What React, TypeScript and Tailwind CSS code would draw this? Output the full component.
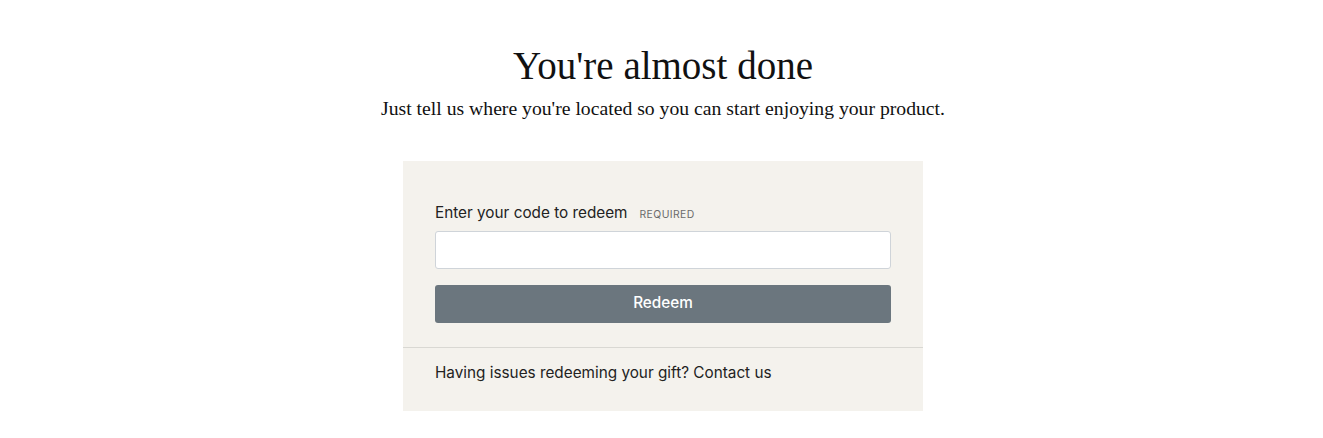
export default function App() {
  return (
    <div className="min-h-[438px] bg-white flex flex-col items-center pt-[43px] pl-[3px]">
      {/* Header */}
      <h1 className="text-[39px] leading-[46px] text-[#111] font-['Liberation_Serif',serif]">
        You're almost done
      </h1>
      <p className="mt-[7px] text-[19.7px] leading-[24px] text-[#111] font-['Liberation_Serif',serif]">
        Just tell us where you're located so you can start enjoying your product.
      </p>

      {/* Redeem panel */}
      <div className="mt-[41px] w-[520px] bg-[#f4f2ed] font-['Inter',sans-serif]">
        <div className="px-8 pt-[41px] pb-6">
          <label className="flex items-baseline gap-[12px] text-[15.3px] text-[#222]">
            Enter your code to redeem
            <span className="text-[10.4px] tracking-[0.04em] text-[#6b6b6b]">REQUIRED</span>
          </label>
          <input
            type="text"
            className="mt-[6px] block w-full h-[38px] rounded-[3px] border border-[#cfd4d9] bg-white px-3 outline-none"
          />
          <button className="mt-4 w-full h-[38px] rounded-[3px] bg-[#6b767e] text-white text-[15.3px] font-medium">
            Redeem
          </button>
        </div>
        <div className="border-t border-[#d9d8d3] px-8 pt-[14px] pb-[26px] text-[15.3px] text-[#222]">
          Having issues redeeming your gift? Contact us
        </div>
      </div>
    </div>
  );
}
